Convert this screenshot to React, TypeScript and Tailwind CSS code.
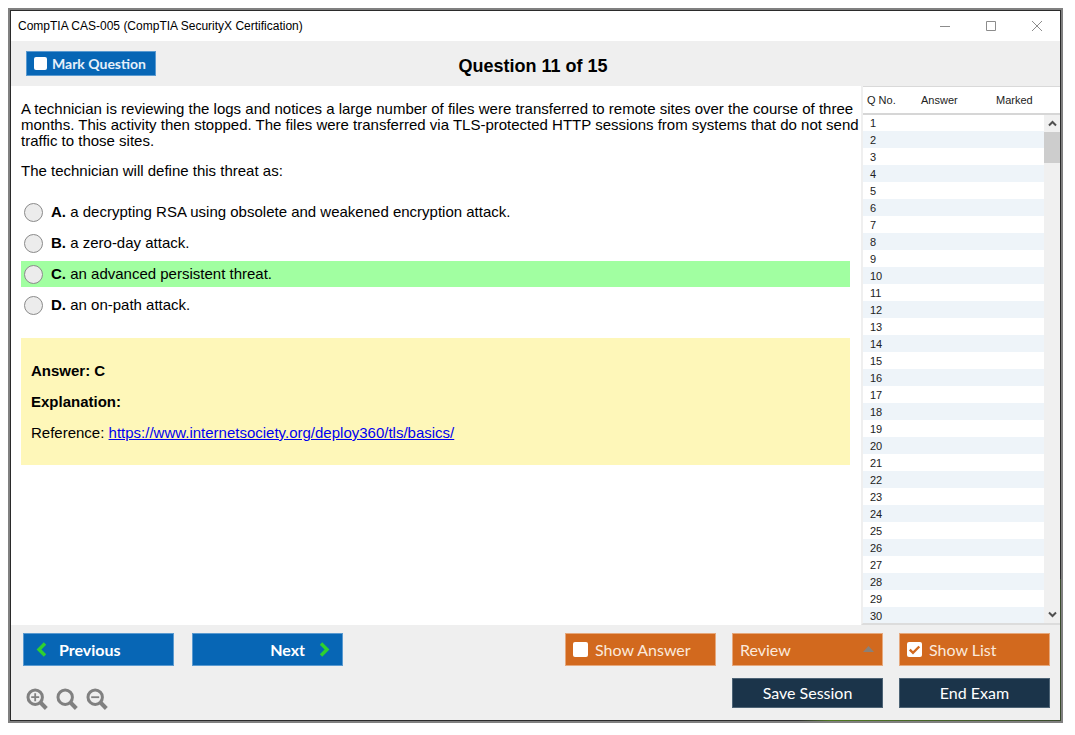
import { ReactNode, useState } from "react"

type T_Option = {
    letter: string
    text: string
    correct?: boolean
}

const OPTIONS: T_Option[] = [
    {
        letter: "A",
        text: "a decrypting RSA using obsolete and weakened encryption attack."
    },
    { letter: "B", text: "a zero-day attack." },
    { letter: "C", text: "an advanced persistent threat.", correct: true },
    { letter: "D", text: "an on-path attack." }
]

const QUESTION_NUMBERS = Array.from({ length: 30 }, (_, i) => i + 1)

type T_CheckProps = {
    children: ReactNode
    className: string
    boxClassName: string
    checked: boolean
    onChange: (checked: boolean) => void
}

function CheckButton(props: T_CheckProps) {
    return (
        <label className={`flex items-center ${props.className}`}>
            <span className={`relative shrink-0 ${props.boxClassName}`}>
                <input
                    type="checkbox"
                    checked={props.checked}
                    onChange={(e) => props.onChange(e.target.checked)}
                    className="block size-full appearance-none rounded-xs bg-white"
                />
                {props.checked && (
                    <svg
                        viewBox="0 0 15 15"
                        className="pointer-events-none absolute inset-0 size-full"
                        fill="none"
                        stroke="#d2691e"
                        strokeWidth="2.4">
                        <path d="M2.8 7.6 6 10.8 12.3 4.5" />
                    </svg>
                )}
            </span>
            {props.children}
        </label>
    )
}

function TitleBar() {
    return (
        <header className="flex h-[30px] shrink-0 items-center justify-between bg-white pl-[7px] pr-[17px]">
            <h1 className="text-[12px] leading-4">
                CompTIA CAS-005 (CompTIA SecurityX Certification)
            </h1>
            <div className="flex items-center gap-[34px]">
                <button type="button" aria-label="Minimize">
                    <svg width="12" height="12" stroke="#8c8c8c" className="block">
                        <path d="M1 6.5h10" />
                    </svg>
                </button>
                <button type="button" aria-label="Maximize">
                    <svg width="12" height="12" fill="none" stroke="#8c8c8c" className="block">
                        <path d="M1.5 1.5h9v9h-9z" />
                    </svg>
                </button>
                <button type="button" aria-label="Close">
                    <svg width="12" height="12" fill="none" stroke="#8c8c8c" className="block">
                        <path d="M1 1l10 10M11 1L1 11" />
                    </svg>
                </button>
            </div>
        </header>
    )
}

function QuestionPanel() {
    return (
        <section className="min-w-0 flex-1 overflow-hidden bg-white pl-[10px] pr-px pt-[15px] text-[15px] leading-4">
            <p className="mb-[14px]">
                A technician is reviewing the logs and notices a large number of
                files were transferred to remote sites over the course of three
                months. This activity then stopped. The files were transferred
                via TLS-protected HTTP sessions from systems that do not send
                traffic to those sites.
            </p>
            <p className="mb-5">The technician will define this threat as:</p>
            <div className="mb-5 mr-[10px] flex flex-col gap-[5px]">
                {OPTIONS.map((option) => (
                    <label
                        key={option.letter}
                        className={`flex h-[26px] items-center pl-[3px] ${option.correct ? "bg-[#a1ffa1]" : ""}`}>
                        <input
                            type="radio"
                            name="answer"
                            className="mr-2 size-[19px] appearance-none rounded-full border border-[#8a8a8a] bg-[#ececec] checked:bg-[#0766b5]"
                        />
                        <span>
                            <b>{option.letter}.</b> {option.text}
                        </span>
                    </label>
                ))}
            </div>
            <div className="mr-[10px] flex flex-col gap-[15px] bg-[#fef7b9] px-[10px] pb-6 pt-[25px]">
                <p className="font-bold">Answer: C</p>
                <p className="font-bold">Explanation:</p>
                <p>
                    Reference:{" "}
                    <a
                        href="https://www.internetsociety.org/deploy360/tls/basics/"
                        className="text-[#0000ee] underline">
                        https://www.internetsociety.org/deploy360/tls/basics/
                    </a>
                </p>
            </div>
        </section>
    )
}

function QuestionList() {
    return (
        <aside className="flex w-[199px] shrink-0 border-b-2 border-l-2 border-b-[#dcdcdc] border-l-[#efefef] bg-white text-[11px] text-[#222]">
            <div className="flex min-w-0 flex-1 flex-col border-t border-[#d9d9d9]">
                <div className="relative min-h-0 flex-1 overflow-hidden">
                    <table className="w-full table-fixed border-collapse">
                        <thead>
                            <tr className="h-[27px] border-b-2 border-[#d6d6d6] text-left">
                                <th className="w-[58px] pl-1 font-normal">Q No.</th>
                                <th className="w-[75px] font-normal">Answer</th>
                                <th className="font-normal">Marked</th>
                            </tr>
                        </thead>
                        <tbody>
                            {QUESTION_NUMBERS.map((n) => (
                                <tr key={n} className="h-[17px] leading-4 even:bg-[#eef4f9]">
                                    <td className="p-0 pl-[7px]">{n}</td>
                                    <td className="p-0" />
                                    <td className="p-0" />
                                </tr>
                            ))}
                        </tbody>
                    </table>
                    <div className="absolute bottom-0 right-0 top-7 flex w-4 flex-col bg-[#f0f0f0]">
                        <button
                            type="button"
                            aria-label="Scroll up"
                            className="flex h-[17px] items-center justify-center">
                            <svg width="9" height="7" fill="none" stroke="#505050" strokeWidth="2">
                                <path d="M1 5.5 4.5 2 8 5.5" />
                            </svg>
                        </button>
                        <div className="h-[31px] bg-[#cdcdcd]" />
                        <button
                            type="button"
                            aria-label="Scroll down"
                            className="mt-auto flex h-[17px] items-center justify-center">
                            <svg width="9" height="7" fill="none" stroke="#505050" strokeWidth="2">
                                <path d="M1 1.5 4.5 5 8 1.5" />
                            </svg>
                        </button>
                    </div>
                </div>
            </div>
        </aside>
    )
}

function ZoomIcon(props: { sign?: string }) {
    return (
        <svg width="22" height="22" viewBox="0 0 22 22" fill="none" stroke="#808080" className="block">
            <circle cx="9.2" cy="9.2" r="7.2" strokeWidth="3" />
            <path d="M14 14 20.3 20.5" strokeWidth="4" />
            {props.sign && <path d={props.sign} strokeWidth="1.8" />}
        </svg>
    )
}

function Footer() {
    const [showAnswer, setShowAnswer] = useState(false)
    const [showList, setShowList] = useState(true)

    return (
        <footer className="flex shrink-0 justify-between bg-[#efefef] pb-[10px] pl-3 pr-[10px] pt-2 font-['Lato',sans-serif] text-[16px] leading-5 text-white">
            <div className="flex flex-col gap-[22px]">
                <div className="flex gap-[18px]">
                    <button
                        type="button"
                        className="flex h-[33px] w-[151px] items-center gap-3 border border-[#5a9ad0] bg-[#0766b5] pl-3 font-bold">
                        <svg width="11" height="15" fill="none" stroke="#2fd02f" strokeWidth="3.4">
                            <path d="M9 1.5 3 7.5 9 13.5" />
                        </svg>
                        Previous
                    </button>
                    <button
                        type="button"
                        className="flex h-[33px] w-[151px] items-center justify-end gap-[14px] border border-[#5a9ad0] bg-[#0766b5] pr-3 font-bold">
                        Next
                        <svg width="11" height="15" fill="none" stroke="#2fd02f" strokeWidth="3.4">
                            <path d="M2 1.5 8 7.5 2 13.5" />
                        </svg>
                    </button>
                </div>
                <div className="flex gap-2 pl-[3px]">
                    <button type="button" aria-label="Zoom in">
                        <ZoomIcon sign="M9.2 5.2v8M5.2 9.2h8" />
                    </button>
                    <button type="button" aria-label="Reset zoom">
                        <ZoomIcon />
                    </button>
                    <button type="button" aria-label="Zoom out">
                        <ZoomIcon sign="M5.2 9.2h8" />
                    </button>
                </div>
            </div>
            <div className="grid grid-cols-[151px_151px_151px] content-start gap-x-4 gap-y-3">
                <CheckButton
                    className="h-[33px] gap-[7px] border border-[#e6a87c] bg-[#d2691e] pl-[7px] text-[#fbe9dc]"
                    boxClassName="size-[15px]"
                    checked={showAnswer}
                    onChange={setShowAnswer}>
                    Show Answer
                </CheckButton>
                <div className="relative">
                    <select
                        aria-label="Review"
                        className="block h-[33px] w-full appearance-none border border-[#e6a87c] bg-[#d2691e] pl-[7px] text-[#fbe9dc]">
                        <option>Review</option>
                    </select>
                    <svg
                        width="11"
                        height="6"
                        fill="#8a8078"
                        className="pointer-events-none absolute right-[9px] top-[13px]">
                        <path d="M5.5 0 11 6H0z" />
                    </svg>
                </div>
                <CheckButton
                    className="h-[33px] gap-[7px] border border-[#e6a87c] bg-[#d2691e] pl-[7px] text-[#fbe9dc]"
                    boxClassName="size-[15px]"
                    checked={showList}
                    onChange={setShowList}>
                    Show List
                </CheckButton>
                <button
                    type="button"
                    className="col-start-2 h-[30px] border border-[#4d6375] bg-[#1b344a]">
                    Save Session
                </button>
                <button type="button" className="h-[30px] border border-[#4d6375] bg-[#1b344a]">
                    End Exam
                </button>
            </div>
        </footer>
    )
}

export default function App() {
    const [marked, setMarked] = useState(false)

    return (
        <div className="flex h-screen bg-white pb-3 pl-2 pr-3 pt-2 font-['Liberation_Sans',Arial,sans-serif] text-black">
            <div className="flex min-w-0 flex-1 border-2 border-[#808080] bg-[#2b2b2b] bg-linear-to-r from-[#2b2b2b] from-75% via-[#4f7a1e] via-78% to-[#3a4a2c] bg-[length:100%_20%] bg-bottom bg-no-repeat p-px">
                <div className="flex min-w-0 flex-1 flex-col">
                    <TitleBar />
                    <div className="grid h-[45px] shrink-0 grid-cols-[1fr_auto_1fr] items-center bg-[#efefef] pl-[15px] pr-5">
                        <CheckButton
                            className="h-[25px] w-[130px] gap-[5px] border border-[#5a9ad0] bg-[#0766b5] pl-[7px] font-['Lato',sans-serif] text-[14px] font-bold text-[#e6f0fa]"
                            boxClassName="size-[13px]"
                            checked={marked}
                            onChange={setMarked}>
                            Mark Question
                        </CheckButton>
                        <h2 className="pt-1 text-[18px] font-bold leading-6">
                            Question 11 of 15
                        </h2>
                    </div>
                    <main className="flex min-h-0 flex-1">
                        <QuestionPanel />
                        <QuestionList />
                    </main>
                    <Footer />
                </div>
            </div>
        </div>
    )
}
